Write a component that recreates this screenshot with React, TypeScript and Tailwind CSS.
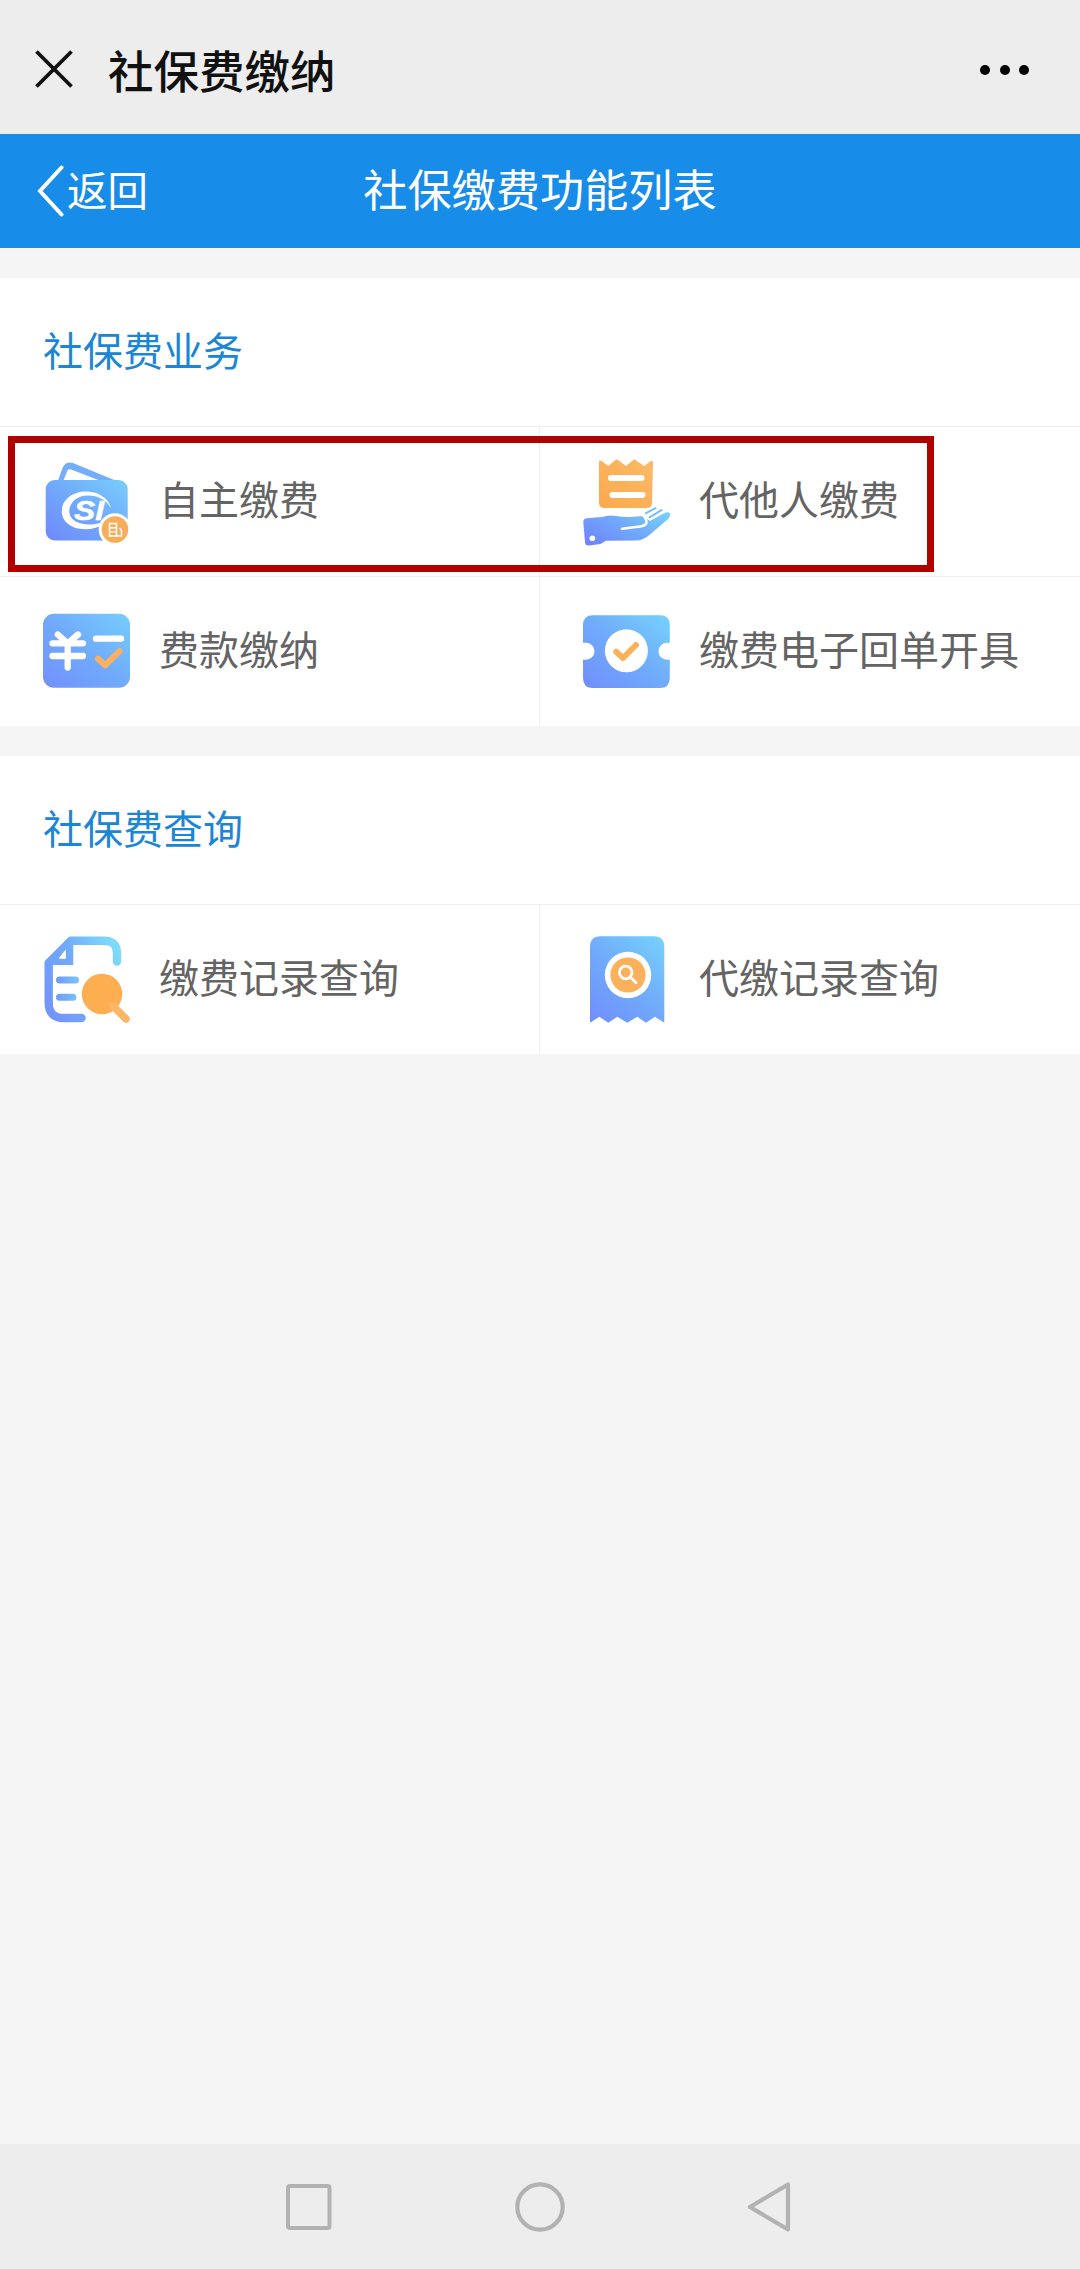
import React from 'react';

const WalletIcon: React.FC = () => (
  <svg viewBox="0 0 90 90" className="w-[90px] h-[90px] shrink-0">
    <defs>
      <linearGradient id="wallet" x1="0" y1="1" x2="1" y2="0">
        <stop offset="0" stopColor="#7088fb" />
        <stop offset="0.5" stopColor="#70a9fb" />
        <stop offset="1" stopColor="#78cffc" />
      </linearGradient>
    </defs>
    <path d="M15.5 25 L20.5 11 Q23.5 3.5 31 6 L77 25 Z" fill="#74aefb" />
    <path d="M21.5 23.3 L25.5 13.5 Q26.3 11.5 29 12.5 L57 23.3 Z" fill="#fff" />
    <rect x="3.7" y="23" width="82" height="60.5" rx="9" fill="url(#wallet)" />
    <path
      d="M69 51 C66 40 55 34.5 44 34.5 C30 34.5 19.8 43 19.8 54.5 C19.8 65 30 72.2 43 72.2 C50 72.2 56 70.5 60 68 L59 65.5 C54 67.3 50 67.8 46 67.5 C35 67 27.3 62 27.3 54.5 C27.3 45.5 35 38.6 46 38.6 C56 38.6 64 43 69 51 Z"
      fill="#fff"
    />
    <text
      x="32"
      y="63.3"
      fill="#fff"
      stroke="#fff"
      strokeWidth="0.5"
      fontFamily="Liberation Sans, sans-serif"
      fontWeight="700"
      fontStyle="italic"
      fontSize="28"
      textLength="30"
      lengthAdjust="spacingAndGlyphs"
    >
      SI
    </text>
    <circle cx="73" cy="72.5" r="16.3" fill="#fff" />
    <circle cx="73" cy="72.5" r="13.3" fill="#f7ae5b" />
    <path d="M67.5 66.5 H74.5 V79 H67.5 Z M67.5 70.7 H74.5 M67.5 74.9 H74.5 M74.5 79 H79.5 V73.5 L77.5 71" fill="none" stroke="#fff" strokeWidth="1.4" />
  </svg>
);

const HandBillIcon: React.FC = () => (
  <svg viewBox="0 0 90 90" className="w-[90px] h-[90px] shrink-0">
    <defs>
      <linearGradient id="bill" x1="0" y1="1" x2="1" y2="0">
        <stop offset="0" stopColor="#fba94e" />
        <stop offset="1" stopColor="#fcba66" />
      </linearGradient>
      <linearGradient id="hand" x1="0" y1="0.8" x2="1" y2="0.1">
        <stop offset="0" stopColor="#6f86fb" />
        <stop offset="0.5" stopColor="#70a8fb" />
        <stop offset="1" stopColor="#76cffb" />
      </linearGradient>
    </defs>
    <path
      d="M17 5 Q17 2.5 19.5 4 L26.3 9 L33.5 3 Q34.7 2 36 3 L44 9 L51.2 3 Q52.3 2 53.5 3 L62 9 L68.5 4.3 Q71 3 71 5.5 L70 46 Q70 51 65 51 H22.5 Q17 51 17 45.5 Z"
      fill="url(#bill)"
    />
    <path d="M29 21 H59.5 M30.5 38 H60.5" stroke="#fff" strokeWidth="6" strokeLinecap="round" />
    <path
      d="M1.3 65 Q1.3 61.5 5 61.2 L16 60.2 Q20 60.5 24 59 Q29 57.8 34 59 Q45 61 57 59.3 Q63 59 65 62 L68 64 L82 56.3 Q87.5 54 88.2 57 Q88.5 60 85.5 62.5 L68 77.5 Q61 83.5 54 83.5 L24 83.8 L18.5 87 L7 88.5 Q3.3 89 3 85 Z"
      fill="url(#hand)"
    />
    <path d="M40 71.8 L54 70 Q64 69.5 64.5 65.5 Q64.8 62.5 62 59" fill="none" stroke="#fff" strokeWidth="2.6" strokeLinecap="round" strokeLinejoin="round" />
    <path d="M64 56.2 L73.5 51.2 M67.5 60.3 L79.5 53.2" stroke="#74bdfb" strokeWidth="2" strokeLinecap="round" />
    <circle cx="10.3" cy="81.3" r="2.8" fill="#fff" />
  </svg>
);

const YuanIcon: React.FC = () => (
  <svg viewBox="0 0 90 90" className="w-[90px] h-[90px] shrink-0">
    <defs>
      <linearGradient id="yuan" x1="0" y1="1" x2="1" y2="0">
        <stop offset="0" stopColor="#7290fd" />
        <stop offset="0.5" stopColor="#70abfb" />
        <stop offset="1" stopColor="#76cefc" />
      </linearGradient>
    </defs>
    <rect x="1" y="6.7" width="87" height="74" rx="11" fill="url(#yuan)" />
    <path
      d="M15.8 27.5 L25.7 36.3 L36 27.5 M10.5 36.3 H41 M10.5 49 H41 M25.7 36.3 V60.5 M54 31.7 H79"
      fill="none"
      stroke="#fff"
      strokeWidth="6.3"
      strokeLinecap="round"
      strokeLinejoin="round"
    />
    <path d="M56 51.8 L63.2 58.3 L77.5 44.3" fill="none" stroke="#f8b062" strokeWidth="6.2" strokeLinecap="round" strokeLinejoin="round" />
  </svg>
);

const TicketIcon: React.FC = () => (
  <svg viewBox="0 0 90 90" className="w-[90px] h-[90px] shrink-0">
    <defs>
      <linearGradient id="ticket" x1="0" y1="1" x2="1" y2="0">
        <stop offset="0" stopColor="#718efd" />
        <stop offset="0.5" stopColor="#70abfb" />
        <stop offset="1" stopColor="#76d2fd" />
      </linearGradient>
    </defs>
    <path
      d="M11 8.3 H78 Q87.8 8.3 87.8 18 V35.8 H85 A8.5 8.5 0 0 0 85 52.8 H87.8 V71 Q87.8 81 78 81 H11 Q1 81 1 71 V52.8 H4 A8.5 8.5 0 0 0 4 35.8 H1 V18 Q1 8.3 11 8.3 Z"
      fill="url(#ticket)"
    />
    <circle cx="44.4" cy="43.8" r="21.5" fill="#fff" />
    <path d="M34.2 44.8 L41 51 L54 38" fill="none" stroke="#fbb05b" strokeWidth="6" strokeLinecap="round" strokeLinejoin="round" />
  </svg>
);

const DocSearchIcon: React.FC = () => (
  <svg viewBox="0 0 90 90" className="w-[90px] h-[90px] shrink-0">
    <defs>
      <linearGradient id="doc" gradientUnits="userSpaceOnUse" x1="2" y1="60" x2="79" y2="20">
        <stop offset="0" stopColor="#7396fc" />
        <stop offset="0.5" stopColor="#72abfc" />
        <stop offset="1" stopColor="#7ddcfd" />
      </linearGradient>
      <linearGradient id="lines" gradientUnits="userSpaceOnUse" x1="14" y1="0" x2="37" y2="0">
        <stop offset="0" stopColor="#7098fb" />
        <stop offset="1" stopColor="#79c6fc" />
      </linearGradient>
    </defs>
    <path
      d="M39.5 83 H22 Q6.7 83 6.7 68 V28 L29 5.7 H62 Q75 5.7 75 18 V26.5"
      fill="none"
      stroke="url(#doc)"
      strokeWidth="8.4"
      strokeLinecap="round"
      strokeLinejoin="round"
    />
    <path d="M2.5 27.5 L27 2 L31.3 2 V30 H5 Z M23.7 14.5 L17 22.8 Q17 23.5 18 23.5 H23.7 Z" fill="url(#doc)" fillRule="evenodd" />
    {/* page corner cut-out */}
    <path d="M23.7 14.5 L17 22.8 Q17 23.5 18 23.5 H23.7 Z" fill="#fff" />
    <path d="M17.5 45 H33.5 M17.5 62.3 H31" stroke="url(#lines)" strokeWidth="7" strokeLinecap="round" />
    <circle cx="60" cy="59" r="20.2" fill="#fcae50" />
    <path d="M71 71 L84 84" stroke="#fbb765" strokeWidth="7.5" strokeLinecap="round" />
  </svg>
);

const BillSearchIcon: React.FC = () => (
  <svg viewBox="0 0 90 90" className="w-[90px] h-[90px] shrink-0">
    <defs>
      <linearGradient id="bill-search" x1="0.1" y1="1" x2="0.9" y2="0">
        <stop offset="0" stopColor="#7090fd" />
        <stop offset="0.5" stopColor="#70abfb" />
        <stop offset="1" stopColor="#76cffc" />
      </linearGradient>
    </defs>
    <path
      d="M8 12 Q8 1.3 18.5 1.3 H72 Q82.3 1.3 82.3 12 V87.8 L73 81.7 L64 87.8 L55.3 81.7 L45.3 87.8 L35.3 81.7 L26.3 87.8 L17.3 81.7 L8 87.8 Z"
      fill="url(#bill-search)"
    />
    <circle cx="46" cy="40" r="23.2" fill="#fff" />
    <circle cx="46" cy="40" r="17.6" fill="#fbb05b" />
    <circle cx="43.7" cy="37.5" r="6.3" fill="none" stroke="#fff" strokeWidth="2.8" />
    <path d="M48.3 42 L54 47.8" stroke="#fff" strokeWidth="2.8" strokeLinecap="round" />
  </svg>
);

const businessItems = [
  { label: '自主缴费', icon: <WalletIcon /> },
  { label: '代他人缴费', icon: <HandBillIcon /> },
  { label: '费款缴纳', icon: <YuanIcon /> },
  { label: '缴费电子回单开具', icon: <TicketIcon /> },
];

const queryItems = [
  { label: '缴费记录查询', icon: <DocSearchIcon /> },
  { label: '代缴记录查询', icon: <BillSearchIcon /> },
];

interface SectionProps {
  title: string;
  items: { label: string; icon: React.ReactNode }[];
  children?: React.ReactNode;
}

const Section: React.FC<SectionProps> = ({ title, items, children }) => (
  <section className="relative bg-white">
    <h2 className="h-[148px] flex items-center pl-[43px] pb-[7px] text-[40px] text-[#1c86d6]">{title}</h2>
    <div className="grid grid-cols-2">
      {items.map((item, i) => (
        <div
          key={item.label}
          className={`h-[150px] flex items-center pl-[42px] border-t border-[#efefef] ${i % 2 === 0 ? 'border-r' : ''}`}
        >
          {item.icon}
          <span className="ml-[27px] pb-[7px] text-[40px] text-[#646464] whitespace-nowrap">{item.label}</span>
        </div>
      ))}
    </div>
    {children}
  </section>
);

const App: React.FC = () => {
  return (
    <div className="w-[1080px] h-[2269px] flex flex-col overflow-hidden bg-[#f5f5f5] font-['Noto_Sans_CJK_SC',sans-serif] leading-none">
      <header className="h-[134px] shrink-0 flex items-center bg-[#ededed] pl-[35px] pr-[51px] pt-1">
        <svg viewBox="0 0 38 38" className="w-[38px] h-[38px]">
          <path d="M1.5 1.5 L36.5 36.5 M36.5 1.5 L1.5 36.5" stroke="#111" strokeWidth="3.8" />
        </svg>
        <h1 className="ml-[35px] flex-1 pt-0.5 text-[45.5px] font-medium text-[#111]">社保费缴纳</h1>
        <div className="flex gap-[9.3px] pt-0.5">
          <span className="w-2.5 h-2.5 rounded-full bg-black" />
          <span className="w-2.5 h-2.5 rounded-full bg-black" />
          <span className="w-2.5 h-2.5 rounded-full bg-black" />
        </div>
      </header>

      <nav className="h-[114px] shrink-0 grid grid-cols-[1fr_auto_1fr] items-center bg-[#178de9] text-white">
        <div className="flex items-center pl-[37px]">
          <svg viewBox="0 0 27 52" className="w-[27px] h-[52px]">
            <path d="M24.5 2.5 L3 26 L24.5 49.5" fill="none" stroke="#fff" strokeWidth="4" strokeLinecap="round" />
          </svg>
          <span className="ml-[3px] pb-1 text-[40.5px]">返回</span>
        </div>
        <span className="pb-1.5 text-[44.2px]">社保缴费功能列表</span>
      </nav>

      <main className="flex-1 flex flex-col gap-[30px] pt-[30px]">
        <Section title="社保费业务" items={businessItems}>
          {/* highlight around the first row */}
          <div className="absolute left-2 top-[158px] w-[926px] h-[136px] border-[7px] border-[#b00000]" />
        </Section>
        <Section title="社保费查询" items={queryItems} />
      </main>

      <footer className="h-[125px] shrink-0 flex items-center bg-[#ededed] pl-[286px]">
        <svg viewBox="0 0 46 46" className="w-[46px] h-[46px]">
          <rect x="2" y="2" width="41.5" height="42" rx="2" fill="none" stroke="#b2b2b2" strokeWidth="4" />
        </svg>
        <svg viewBox="0 0 50 50" className="ml-[183px] w-[50px] h-[50px]">
          <circle cx="25" cy="25" r="22.7" fill="none" stroke="#b2b2b2" strokeWidth="4.2" />
        </svg>
        <svg viewBox="0 0 44 50" className="ml-[182px] w-[44px] h-[50px]">
          <path d="M41 2.5 V47.5 L3 25 Z" fill="none" stroke="#b2b2b2" strokeWidth="4.2" strokeLinejoin="round" />
        </svg>
      </footer>
    </div>
  );
};

export default App;
